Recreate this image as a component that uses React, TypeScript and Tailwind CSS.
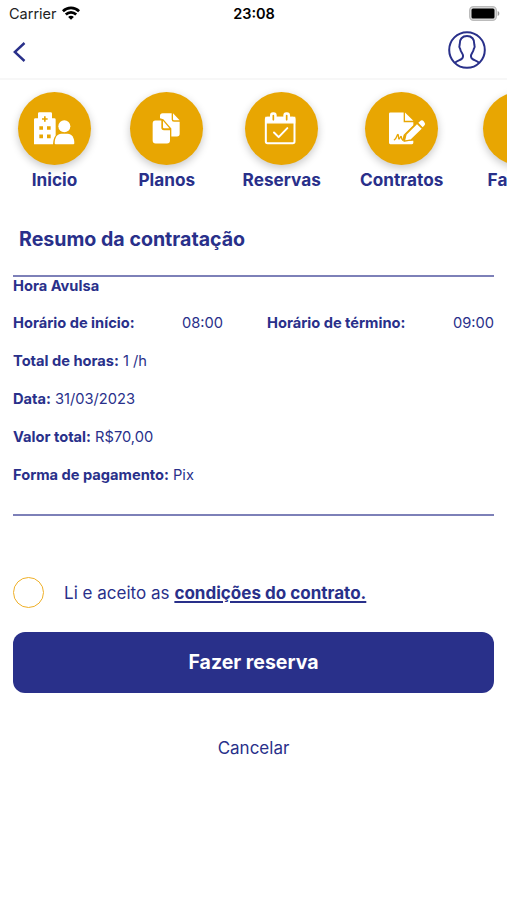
import React from "react";

interface MenuItem {
	label: string;
	icon?: React.ReactNode;
}

const BuildingUserIcon = () => (
	<svg viewBox="54 34.5 219 219" className="w-full h-full" fill="white">
		<path
			fillRule="evenodd"
			d="M114 99q0-4 4-4h34q4 0 4 4v14h7q4 0 4 4v48q-7 8-8 26h-57V117q0-4 4-4h8ZM132 107v6h-6v5h6v6h5v-6h6v-5h-6v-6ZM118 137v11h11v-11ZM141 137v11h11v-11ZM118 162v11h11v-11ZM141 162v11h11v-11Z"
		/>
		<circle cx="193" cy="137" r="18" />
		<path d="M164 188c0-17 8-28 20-28h19c12 0 20 11 20 28q0 3-3 3h-53q-3 0-3-3Z" />
	</svg>
);

const CopyIcon = () => (
	<svg viewBox="62 34.5 219 219" className="w-full h-full" fill="white">
		<path d="M152 113v-7q0-8 8-8h27v19q0 7 7 7h17v36q0 8-8 8h-17v-24l-24-28Z" />
		<path d="M191 98l20 21h-17q-3 0-3-3Z" />
		<path d="M138 120h18v21q0 8 8 8h18v31q0 9-9 9h-34q-9 0-9-9v-51q0-9 8-9Z" />
		<path d="M161 121l19 22h-16q-3 0-3-3Z" />
	</svg>
);

const CalendarCheckIcon = () => (
	<svg viewBox="62 34.5 219 219" className="w-full h-full" fill="none" stroke="white">
		<rect x="124.500" y="112" width="86" height="76" rx="5" strokeWidth="6" />
		<path d="M125 111h86v16h-86Z" fill="white" strokeWidth="4" />
		<rect x="137" y="95" width="20" height="30" rx="9" fill="white" stroke="none" />
		<rect x="177" y="95" width="20" height="30" rx="9" fill="white" stroke="none" />
		<path d="M147 105v13M187 105v13" stroke="#e8a602" strokeWidth="5" strokeLinecap="round" />
		<path d="M149 156l14 14 26-27" strokeWidth="6" strokeLinecap="round" strokeLinejoin="round" />
	</svg>
);

const ContractIcon = () => (
	<svg viewBox="62 34.5 219 219" className="w-full h-full" fill="white">
		<path d="M138 96h40v29h29v9l-29 29-5 18h34v6q0 4-4 4h-65q-4 0-4-4v-87q0-4 4-4Z" />
		<path d="M182 96l25 25h-25Z" />
		<path
			d="M150 178c7-2 7-16 11-16 3 0 0 14 3 14s3-8 6-8 0 9 4 9h8"
			fill="none"
			stroke="#e8a602"
			strokeWidth="4"
			strokeLinecap="round"
		/>
		<path d="M180 182l5-21 33-33 17 17-34 33Z" stroke="#e8a602" strokeWidth="4" />
		<path d="M222 127l5-5q6-5 11 0l2 3q5 5 0 10l-5 5Z" />
	</svg>
);

const UserIcon = () => (
	<svg viewBox="0 0 38 38" className="w-[38px] h-[38px]" fill="none" stroke="#29308a" strokeWidth="2">
		<circle cx="19" cy="19" r="17.800" />
		<path
			d="M7 31.800c1.500-1.400 3.800-2.300 5.800-3.300 2.600-1.300 2.800-4 1.300-6.200-1.200-1.700-1.700-2.700-1.900-4.300-1.100-1.300-1-3.300-.5-4.700-.4-5.300 2.700-8.200 7.300-8.200s7.700 2.900 7.300 8.200c.5 1.400.6 3.400-.5 4.700-.2 1.600-.7 2.600-1.900 4.300-1.500 2.200-1.300 4.900 1.300 6.200 2 1 4.300 1.900 5.800 3.300"
			strokeLinejoin="round"
		/>
	</svg>
);

const menuItems: MenuItem[] = [
	{ label: "Inicio", icon: <BuildingUserIcon /> },
	{ label: "Planos", icon: <CopyIcon /> },
	{ label: "Reservas", icon: <CalendarCheckIcon /> },
	{ label: "Contratos", icon: <ContractIcon /> },
	{ label: "Faturas" },
];

const details = [
	{ label: "Total de horas:", value: "1 /h" },
	{ label: "Data:", value: "31/03/2023" },
	{ label: "Valor total:", value: "R$70,00" },
	{ label: "Forma de pagamento:", value: "Pix" },
];

const StatusBar = () => (
	<div className="h-[27px] shrink-0 grid grid-cols-3 items-center pl-[9px] pr-[7px] text-[14.5px] text-black">
		<div className="flex items-center gap-[5px]">
			<span className="text-[#222]">Carrier</span>
			<svg viewBox="0 0 18 14" className="w-[18px] h-[14px] -mt-[2px]" fill="none" stroke="black" strokeWidth="2.700">
				<path d="M.9 5.200c4.600-4.500 11.600-4.500 16.200 0" />
				<path d="M3.800 8.500c3-2.900 7.400-2.900 10.400 0" />
				<path d="M9 13.800l-2.900-2.900c1.600-1.500 4.200-1.500 5.800 0Z" fill="black" stroke="none" />
			</svg>
		</div>
		<span className="text-center font-semibold -ml-px">23:08</span>
		<svg viewBox="0 0 31 15" className="w-[31px] h-[15px] justify-self-end -mt-px">
			<rect x=".6" y=".6" width="26.800" height="13.800" rx="4" fill="#ddd" stroke="#bbb" strokeWidth="1.200" />
			<rect x="2.500" y="2.500" width="23" height="10" rx="1.500" fill="black" />
			<path d="M28.700 5v5c2.200-1 2.200-4 0-5Z" fill="#999" />
		</svg>
	</div>
);

const App: React.FC = () => {
	return (
		<div className="w-full h-[900px] overflow-hidden flex flex-col bg-white text-[#29308a] font-['Inter',sans-serif]">
			<StatusBar />

			<header className="h-[53px] shrink-0 flex items-center justify-between pl-[13px] pr-[21px] pb-[6px] border-b-2 border-[#f7f7f7]">
				<svg viewBox="0 0 13 20" className="w-[13px] h-5 mt-[5px]" fill="none" stroke="#29308a" strokeWidth="2.400">
					<path d="M11.500 1L1.800 10l9.700 9" />
				</svg>
				<UserIcon />
			</header>

			<nav className="shrink-0 flex gap-[39.3px] pl-[18px] pt-[11.5px] h-[128px] overflow-hidden">
				{menuItems.map((item) => (
					<div key={item.label} className="shrink-0 flex flex-col items-center">
						<div className="w-[73px] h-[73px] rounded-full bg-[#e8a602] shadow-[0_3px_9px_rgba(0,0,0,0.22)]">
							{item.icon}
						</div>
						<span className="mt-[3px] text-[17.2px] leading-6 font-bold">{item.label}</span>
					</div>
				))}
			</nav>

			<main className="px-[13px]">
				<h1 className="mt-[17px] pl-[6px] text-[19.6px] leading-7 font-bold">Resumo da contratação</h1>

				<section className="mt-[22px] h-[241px] border-y-2 border-[#7d80b8] text-[14.65px] leading-5">
					<p className="-mt-px font-bold">Hora Avulsa</p>
					<div className="mt-[17.4px] flex justify-between">
						<div className="w-[210px] flex justify-between">
							<span className="font-bold">Horário de início:</span>
							<span>08:00</span>
						</div>
						<div className="w-[227px] flex justify-between">
							<span className="font-bold">Horário de término:</span>
							<span>09:00</span>
						</div>
					</div>
					{details.map((detail) => (
						<p key={detail.label} className="mt-[17.8px]">
							<span className="font-bold">{detail.label}</span> {detail.value}
						</p>
					))}
				</section>

				<label className="mt-[61px] flex items-center text-[17.05px] leading-6">
					<span className="w-[31px] h-[31px] mr-5 rounded-full border-[1.5px] border-[#efb028]" />
					<span>
						Li e aceito as{" "}
						<a className="font-bold underline decoration-[1.5px] underline-offset-2">condições do contrato.</a>
					</span>
				</label>

				<button className="mt-6 w-full h-[61px] pt-px rounded-[12px] bg-[#29308a] text-white text-[19.5px] font-bold">
					Fazer reserva
				</button>
				<button className="mt-[43px] w-full text-center text-[17px] leading-6">Cancelar</button>
			</main>
		</div>
	);
};

export default App;
